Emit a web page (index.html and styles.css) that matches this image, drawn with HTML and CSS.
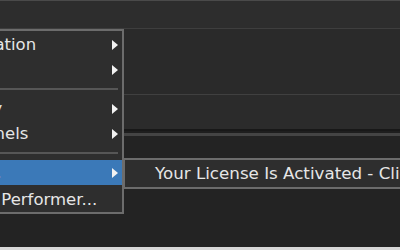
FILE: index.html
```html
<!DOCTYPE html>
<html lang="en">
<head>
    <meta charset="UTF-8">
    <title>Menu</title>
    <link rel="stylesheet" href="styles.css">
</head>
<body>

<div class="screen">
    <div class="toolbar"></div>
    <div class="pane pane-top"></div>
    <div class="pane pane-mid"></div>
    <div class="divider"></div>
    <div class="pane pane-bottom"></div>
    <div class="statusline"></div>

    <!-- popup menu, runs off the left edge -->
    <ul class="menu">
        <li class="item"><span class="label">Animation</span><span class="arrow"></span></li>
        <li class="item"><span class="label">View</span><span class="arrow"></span></li>
        <li class="sep"></li>
        <li class="item"><span class="label">Query</span><span class="arrow"></span></li>
        <li class="item"><span class="label">Channels</span><span class="arrow"></span></li>
        <li class="sep"></li>
        <li class="item active"><span class="label">Find...</span><span class="arrow"></span></li>
        <li class="item last"><span class="label">Open Performer...</span></li>
    </ul>

    <div class="submenu">
        <div class="sub-item">Your License Is Activated - Click here to manage</div>
    </div>
</div>

</body>
</html>
```

FILE: styles.css
```css
html,body{
    margin: 0;
    padding: 0;
    height: 100%;
}
body{
    background: #222;
    overflow: hidden;
    font-family: "DejaVu Sans", "Noto Sans", sans-serif;
}

.screen{
    position: relative;
    width: 400px;
    height: 250px;
    display: flex;
    flex-direction: column;
    background: #232323;
    overflow: hidden;
}

.toolbar{
    height: 27px;
    background: #2d2d2d;
    border-top: 1px solid #4a4a4a;
    border-bottom: 1px solid #3e3e3e;
    flex: none;
}

.pane{
    flex: none;
    background: #2a2a2a;
}
.pane-top{
    height: 65px;
    border-bottom: 1px solid #404040;
}
.pane-mid{
    height: 34px;
    background: #2b2b2b;
}
.divider{
    flex: none;
    height: 2px;
    background: #181818;
    border-bottom: 2px solid #1e1e1e;
    box-shadow: 0 3px 0 #444;
    margin-bottom: 2px;
}
.pane-bottom{
    flex: 1;
    background: #232323;
    margin-top: 1px;
}
.statusline{
    flex: none;
    height: 3px;
    background: #d8d8d8;
}

/* menu */
.menu{
    position: absolute;
    top: 29px;
    left: -58px;
    width: 178px;
    margin: 0;
    padding: 1px 0 0;
    list-style: none;
    background: #2e2e2e;
    border: 2px solid #6c6c6c;
    color: #e6e6e6;
    font-size: 16.5px;
    white-space: nowrap;
}
.item{
    height: 25px;
    display: flex;
    align-items: center;
    justify-content: space-between;
    padding: 0 4px 0 8px;
}
.item.last{
    height: 27px;
    padding-top: 2px;
    box-sizing: border-box;
}
.item.active{
    background: #3b79b8;
    color: #fff;
}
.arrow{
    width: 0;
    height: 0;
    border-top: 5px solid transparent;
    border-bottom: 5px solid transparent;
    border-left: 6px solid #f2f2f2;
}
.sep{
    height: 2px;
    margin: 6px 4px 6px 0;
    background: #565656;
}

.submenu{
    position: absolute;
    top: 158px;
    left: 123px;
    width: 300px;
    height: 27px;
    background: #2e2e2e;
    border: 2px solid #6c6c6c;
    color: #e6e6e6;
    font-size: 16.7px;
    white-space: nowrap;
    overflow: hidden;
}
.sub-item{
    line-height: 27px;
    padding-left: 30px;
}
```
